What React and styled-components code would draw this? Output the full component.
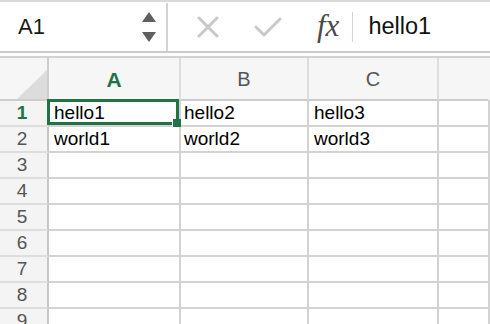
import React from "react";
import styled, { createGlobalStyle } from "styled-components";

const Global = createGlobalStyle`
  html, body { margin: 0; padding: 0; background: #fff; }
  body { width: 490px; height: 324px; overflow: hidden; font-family: "Liberation Sans", Arial, sans-serif; }
`;

const Page = styled.div`
  width: 490px;
  height: 324px;
  overflow: hidden;
  display: flex;
  flex-direction: column;
  border-top: 2px solid #d9d9d9;
  box-sizing: border-box;
`;

const FormulaBar = styled.div`
  height: 51px;
  flex: none;
  display: flex;
  align-items: stretch;
  background: #fff;
  border-bottom: 2px solid #cbcbcb;
  box-sizing: border-box;
  padding-top: 1px;
`;

const NameBox = styled.div`
  width: 168px;
  flex: none;
  display: flex;
  align-items: center;
  justify-content: space-between;
  padding: 0 10px 0 18px;
  box-sizing: border-box;
  border-right: 2px solid #d4d4d4;
  font-size: 22px;
  color: #1a1a1a;
`;

const Spinner = styled.div`
  display: flex;
  flex-direction: column;
  gap: 10px;
  align-items: center;
  margin-top: -1px;
`;

const Tools = styled.div`
  display: flex;
  align-items: center;
  flex: 1;
`;

const ToolIcon = styled.div`
  width: ${(p) => p.$w}px;
  margin-left: ${(p) => p.$ml}px;
  display: flex;
  align-items: center;
  justify-content: center;
`;

const Fx = styled.span`
  font-family: "Liberation Serif", "Times New Roman", serif;
  font-style: italic;
  font-size: 31px;
  color: #4a4a4a;
  margin-left: 35px;
  line-height: 1;
  margin-top: -4px;
`;

const FxSep = styled.div`
  width: 1px;
  height: 30px;
  background: #d6d6d6;
  margin-left: 13px;
`;

const FormulaText = styled.span`
  margin-left: 15px;
  font-size: 23.5px;
  color: #111;
  margin-top: -2px;
`;

const Gap = styled.div`
  height: 3px;
  flex: none;
  background: #fbfbfb;
  border-bottom: 2px solid #d2d2d2;
`;

const Sheet = styled.div`
  display: grid;
  grid-template-columns: 49px 132px 128px 130px 1fr;
  grid-template-rows: 43px repeat(9, 26px);
  flex: none;
`;

const Cell = styled.div`
  box-sizing: border-box;
  border-right: 2px solid #d3d3d3;
  border-bottom: 2px solid #d3d3d3;
  position: relative;
  display: flex;
  align-items: center;
  padding-left: ${(p) => p.$pl ?? 5}px;
  font-size: 19px;
  color: #000;
  background: #fff;
  white-space: nowrap;
`;

const ColHead = styled(Cell)`
  background: #f6f6f6;
  border-bottom: 2px solid #cdcdcd;
  border-right: 2px solid ${(p) => (p.$last ? "transparent" : "#dedede")};
  justify-content: center;
  padding: 2px 0 0 0;
  font-size: ${(p) => (p.$active ? 21 : 20)}px;
  color: ${(p) => (p.$active ? "#217346" : "#555")};
  font-weight: ${(p) => (p.$active ? "bold" : "normal")};
`;

const Corner = styled(Cell)`
  background: #f6f6f6;
  border-bottom: 2px solid #cdcdcd;
  border-right: 2px solid #cdcdcd;
  padding: 0;
  align-items: flex-end;
  justify-content: flex-end;
`;

const RowHead = styled(Cell)`
  background: #f4f4f4;
  border-right: 2px solid #c6c6c6;
  border-bottom: 2px solid #dedede;
  justify-content: center;
  padding: 0 3px 0 0;
  font-size: 19px;
  color: ${(p) => (p.$active ? "#217346" : "#555")};
  font-weight: ${(p) => (p.$active ? "bold" : "normal")};
`;

const Selection = styled.div`
  position: absolute;
  left: -2px;
  top: -2px;
  right: 0px;
  bottom: 0px;
  border: 3px solid #217346;
  pointer-events: none;
`;

const Handle = styled.div`
  position: absolute;
  right: -5px;
  bottom: -5px;
  width: 8px;
  height: 8px;
  background: #217346;
  border: 1px solid #fff;
  border-width: 0 0 0 1px;
`;

const data = [
  ["hello1", "hello2", "hello3"],
  ["world1", "world2", "world3"],
  [], [], [], [], [], [], [],
];

export default function App() {
  return (
    <>
      <Global />
      <Page>
        <FormulaBar>
          <NameBox>
            <span>A1</span>
            <Spinner>
              <svg width="14" height="10" viewBox="0 0 14 10">
                <polygon points="7,0 14,10 0,10" fill="#5f5f5f" />
              </svg>
              <svg width="14" height="10" viewBox="0 0 14 10">
                <polygon points="0,0 14,0 7,10" fill="#5f5f5f" />
              </svg>
            </Spinner>
          </NameBox>
          <Tools>
            <ToolIcon $w={24} $ml={28}>
              <svg width="22" height="22" viewBox="0 0 22 22">
                <path d="M2 2 L20 20 M20 2 L2 20" stroke="#c9c9c9" strokeWidth="3" strokeLinecap="round" />
              </svg>
            </ToolIcon>
            <ToolIcon $w={28} $ml={34}>
              <svg width="28" height="20" viewBox="0 0 28 20">
                <path d="M2 10 L10 18 L26 2" stroke="#c9c9c9" strokeWidth="3" fill="none" strokeLinecap="round" strokeLinejoin="round" />
              </svg>
            </ToolIcon>
            <Fx>fx</Fx>
            <FxSep />
            <FormulaText>hello1</FormulaText>
          </Tools>
        </FormulaBar>
        <Gap />
        <Sheet>
          <Corner>
            <svg width="32" height="30" viewBox="0 0 32 30">
              <polygon points="32,1 32,30 2,30" fill="#dcdcdc" />
            </svg>
          </Corner>
          <ColHead $active>A</ColHead>
          <ColHead>B</ColHead>
          <ColHead>C</ColHead>
          <ColHead $last />
          {data.map((row, r) => (
            <React.Fragment key={r}>
              <RowHead $active={r === 0}>{r + 1}</RowHead>
              {[0, 1, 2, 3].map((c) => (
                <Cell key={c} $pl={c === 1 ? 3 : 5}>
                  {row[c] || ""}
                  {r === 0 && c === 0 && (
                    <Selection>
                      <Handle />
                    </Selection>
                  )}
                </Cell>
              ))}
            </React.Fragment>
          ))}
        </Sheet>
      </Page>
    </>
  );
}
